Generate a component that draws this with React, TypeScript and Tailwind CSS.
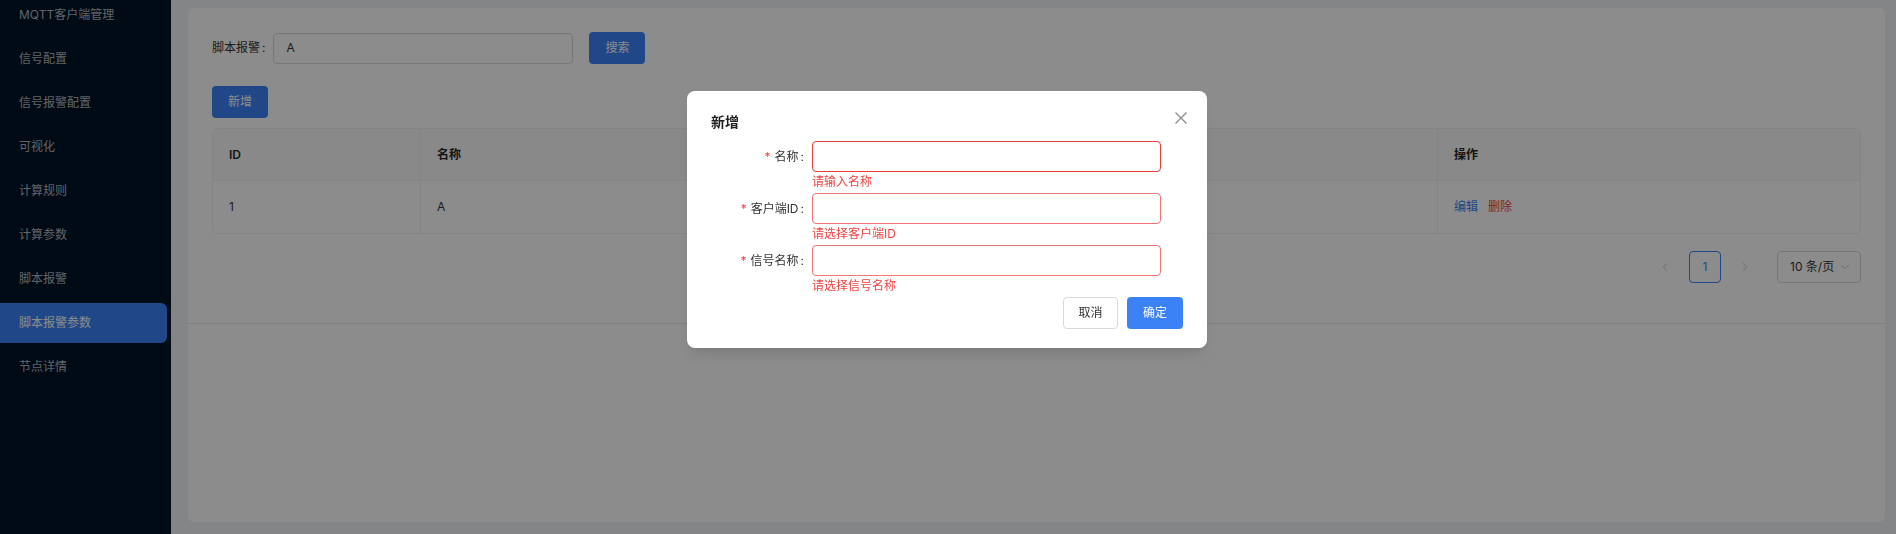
import React from 'react';
import { ChevronLeft, ChevronRight, ChevronDown } from 'lucide-react';

const MENU = [
  'MQTT客户端管理',
  '信号配置',
  '信号报警配置',
  '可视化',
  '计算规则',
  '计算参数',
  '脚本报警',
  '脚本报警参数',
  '节点详情',
];

const ACTIVE = '脚本报警参数';

const FIELDS = [
  { label: '名称', error: '请输入名称', focused: true },
  { label: '客户端ID', error: '请选择客户端ID', focused: false },
  { label: '信号名称', error: '请选择信号名称', focused: false },
];

function Sidebar() {
  return (
    <aside className="w-[171px] shrink-0 h-full bg-[#001529] overflow-hidden">
      <div className="flex flex-col gap-1 -mt-[5px]">
        {MENU.map(item => {
          const active = item === ACTIVE;
          return (
            <div
              key={item}
              className={`h-10 mr-1 pl-[19px] flex items-center text-[12px] rounded-r-[6px] ${
                active ? 'bg-[#3b82f6] text-white' : 'text-white/70'
              }`}
            >
              {item}
            </div>
          );
        })}
      </div>
    </aside>
  );
}

function DataTable() {
  return (
    <div className="border border-[#f0f0f0] rounded-[6px] overflow-hidden text-[12px]">
      <div className="grid grid-cols-[208px_1fr_1fr_1fr_422px] h-[52px] bg-[#fafafa] border-b border-[#f0f0f0] font-semibold text-[#262626]">
        <div className="flex items-center px-4 border-r border-[#f0f0f0]">ID</div>
        <div className="flex items-center px-4 border-r border-[#f0f0f0]">名称</div>
        <div className="border-r border-[#f0f0f0]" />
        <div className="border-r border-[#f0f0f0]" />
        <div className="flex items-center px-4">操作</div>
      </div>
      <div className="grid grid-cols-[208px_1fr_1fr_1fr_422px] h-[52px] bg-white text-[#333]">
        <div className="flex items-center px-4 border-r border-[#f0f0f0]">1</div>
        <div className="flex items-center px-4 border-r border-[#f0f0f0]">A</div>
        <div className="border-r border-[#f0f0f0]" />
        <div className="border-r border-[#f0f0f0]" />
        <div className="flex items-center px-4 gap-[10px]">
          <span className="text-[#3b82f6]">编辑</span>
          <span className="text-[#ef4444]">删除</span>
        </div>
      </div>
    </div>
  );
}

function Pagination() {
  return (
    <div className="flex justify-end items-center mt-[17px] text-[12px]">
      <div className="w-8 h-8 flex items-center justify-center text-[#bfbfbf]">
        <ChevronLeft size={14} strokeWidth={1.5} />
      </div>
      <div className="w-8 h-8 ml-2 flex items-center justify-center border border-[#3b82f6] rounded-[4px] text-[#3b82f6]">
        1
      </div>
      <div className="w-8 h-8 ml-2 flex items-center justify-center text-[#bfbfbf]">
        <ChevronRight size={14} strokeWidth={1.5} />
      </div>
      <div className="w-[84px] h-8 ml-4 pl-3 pr-2 flex items-center justify-between border border-[#d9d9d9] rounded-[4px] text-[#333]">
        <span>10 条/页</span>
        <ChevronDown size={14} strokeWidth={1.5} className="text-[#bfbfbf]" />
      </div>
    </div>
  );
}

function AddModal() {
  return (
    <div className="fixed inset-0 bg-black/45 flex justify-center">
      <div className="relative w-[520px] h-[257px] mt-[91px] mr-[2px] bg-white rounded-[8px] shadow-lg px-6 pt-[20px] pb-[19px] flex flex-col">
        <div className="text-[14px] font-semibold text-[#1f1f1f] leading-[22px]">新增</div>
        <button className="absolute top-[19px] right-[18px] w-4 h-4 flex items-center justify-center">
          <svg width="12" height="12" viewBox="0 0 12 12" fill="none" stroke="#8c8c8c" strokeWidth="1.3">
            <path d="M0.5 0.5 L11.5 11.5 M11.5 0.5 L0.5 11.5" />
          </svg>
        </button>
        <div className="mt-[8px] flex flex-col">
          {FIELDS.map(f => (
            <div key={f.label} className="flex">
              <div className="w-[101px] h-[31px] flex items-center justify-end text-[12px] text-[#333]">
                <span className="text-[#ef4444] mr-1">*</span>
                <span>{f.label}</span>
                <span className="ml-[2px] mr-2">:</span>
              </div>
              <div className="flex flex-col">
                <div
                  className={`w-[349px] h-[31px] rounded-[4px] border ${
                    f.focused ? 'border-[#e53e3e]' : 'border-[#f47575]'
                  }`}
                />
                <div className="h-[21px] leading-[20px] text-[12px] text-[#ef4444]">{f.error}</div>
              </div>
            </div>
          ))}
        </div>
        <div className="flex justify-end gap-[9px] text-[12px]">
          <button className="w-[55px] h-8 border border-[#d9d9d9] rounded-[4px] text-[#333] bg-white">取消</button>
          <button className="w-[56px] h-8 rounded-[4px] bg-[#3b82f6] text-white">确定</button>
        </div>
      </div>
    </div>
  );
}

export default function App() {
  return (
    <div
      className="flex w-full h-screen overflow-hidden"
      style={{ fontFamily: 'Inter, "Noto Sans CJK SC", sans-serif' }}
    >
      <Sidebar />
      <main className="flex-1 bg-[#f0f2f5] pl-[17px] pt-2 pr-[11px] pb-3 flex flex-col">
        <section className="bg-white rounded-t-[6px] border-b border-[#e8e8e8] px-6 pt-6 pb-[40px]">
          <div className="flex items-center h-8 text-[12px] text-[#333]">
            <span>脚本报警</span>
            <span className="ml-[2px] mr-[8px]">:</span>
            <div className="w-[300px] h-[31px] border border-[#d9d9d9] rounded-[4px] flex items-center px-3 text-[#333]">
              A
            </div>
            <button className="ml-4 w-14 h-8 rounded-[4px] bg-[#3b82f6] text-white">搜索</button>
          </div>
          <button className="mt-[22px] w-14 h-8 rounded-[4px] bg-[#3b82f6] text-white text-[12px]">新增</button>
          <div className="mt-[10px]">
            <DataTable />
          </div>
          <Pagination />
        </section>
        <section className="flex-1 bg-white rounded-b-[6px]" />
      </main>
      <AddModal />
    </div>
  );
}
